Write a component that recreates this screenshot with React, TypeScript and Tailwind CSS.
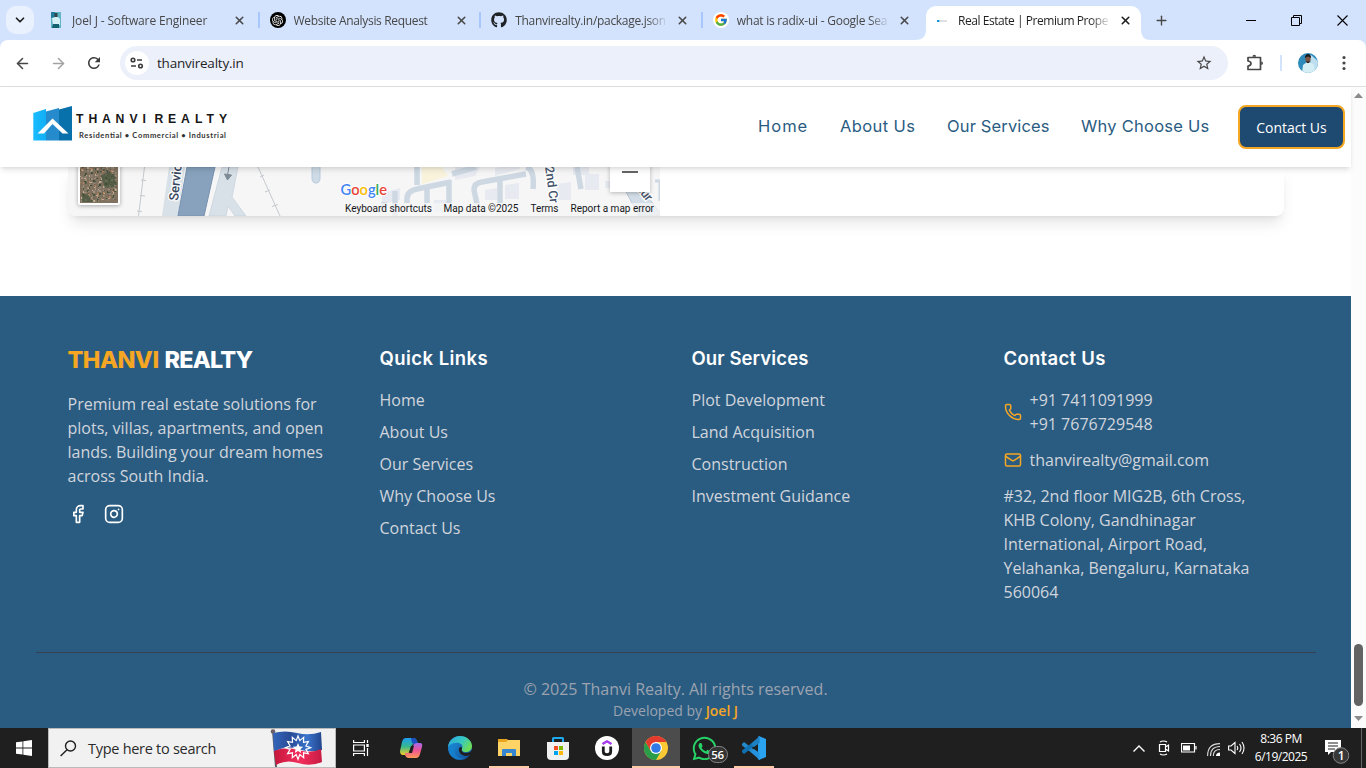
import React from 'react';
import { Facebook, Instagram, Phone, Mail, X, Plus, ChevronDown, ArrowLeft, ArrowRight } from 'lucide-react';
import { FaGithub, FaWhatsapp } from 'react-icons/fa';
import { FcGoogle } from 'react-icons/fc';
import { SiOpenai } from 'react-icons/si';
import { MdRefresh, MdStarOutline } from 'react-icons/md';

const tabs = [
  { title: 'Joel J - Software Engineer', tracking: 'tracking-[-0.14px]', icon: <PortraitIcon /> },
  {
    title: 'Website Analysis Request',
    tracking: 'tracking-[-0.33px]',
    icon: (
      <span className="flex size-4 items-center justify-center rounded-full bg-black text-white">
        <SiOpenai size={11} />
      </span>
    ),
  },
  { title: 'Thanvirealty.in/package.json', tracking: 'tracking-[-0.3px]', icon: <FaGithub size={16} color="#1f2328" /> },
  {
    title: 'what is radix-ui - Google Sea',
    tracking: 'tracking-[-0.25px]',
    icon: (
      <span className="flex size-4 items-center justify-center rounded-full bg-white">
        <FcGoogle size={14} />
      </span>
    ),
  },
];

function PortraitIcon() {
  return (
    <svg width="16" height="16" viewBox="0 0 16 16">
      <rect x="3" width="10" height="16" fill="#5fb4c6" />
      <rect x="3" width="4" height="6" fill="#247c9c" />
      <path d="M4 6l3-1h3l2 2v6H5z" fill="#d5f0f5" />
      <rect x="6.500" y="1" width="3" height="4" fill="#32444a" />
      <path d="M5 12h6v4H4z" fill="#14606f" />
    </svg>
  );
}

function TabStrip() {
  return (
    <div className="flex h-10 shrink-0 bg-[#d3e3fd]">
      <div className="w-[38px] shrink-0 pt-1.5 pl-1.5">
        <div className="flex size-7 items-center justify-center rounded-[10px] bg-[#e9f1fe]">
          <ChevronDown size={14} strokeWidth={3} color="#1f1f1f" />
        </div>
      </div>
      {tabs.map((t, i) => (
        <div key={t.title} className="flex w-[221.6px] shrink-0 items-center pl-2.5">
          <span className="flex size-4 shrink-0">{t.icon}</span>
          <span
            className={`mt-px ml-2 w-[150px] text-[12px] leading-5 whitespace-nowrap text-[#474747] [mask-image:linear-gradient(to_right,black_132px,transparent_153px)] ${t.tracking}`}
          >
            {t.title}
          </span>
          <X size={13} strokeWidth={2.8} color="#474747" className="ml-[11px] shrink-0" />
          <span className={`ml-auto h-4 w-0.5 ${i < 3 ? 'bg-[#a8c7fa]' : ''}`} />
        </div>
      ))}
      <div className="-ml-[1.4px] flex items-end">
        <svg width="11" height="10" className="-ml-2">
          <path d="M0 10 Q11 10 11 0 V10Z" fill="#fff" />
        </svg>
        <div className="flex h-[34px] w-[215px] items-center self-end rounded-t-[10px] bg-white pl-2.5">
          <svg width="16" height="16" className="mt-[-5px] shrink-0">
            <rect x="1" y="7" width="2.500" height="2" fill="#1b95d3" />
            <rect x="4" y="7.500" width="7" height="1" fill="#bbc4ca" />
          </svg>
          <span className="mt-[-4px] ml-1.5 w-[150px] text-[12px] leading-5 tracking-[-0.45px] whitespace-nowrap text-[#1f1f1f] [mask-image:linear-gradient(to_right,black_132px,transparent_153px)]">
            Real Estate | Premium Proper
          </span>
          <X size={13} strokeWidth={3} color="#1f1f1f" className="mt-[-6px] ml-[11px] shrink-0" />
        </div>
        <svg width="10" height="10">
          <path d="M0 0 Q0 10 10 10 H0Z" fill="#fff" />
        </svg>
      </div>
      <Plus size={15} strokeWidth={2.2} color="#474747" className="mt-[13px] ml-[3px]" />
      <div className="ml-auto flex items-center gap-[35px] pr-[18px]">
        <span className="h-px w-[10px] bg-black" />
        <svg width="11" height="11" fill="none" stroke="#000">
          <path d="M.5 2.500h8v8h-8zM2.500 2.500v-2h8v8h-2" />
        </svg>
        <svg width="11" height="11" stroke="#000" strokeWidth="1.100">
          <path d="M.5.5l10 10M10.500.5l-10 10" />
        </svg>
      </div>
    </div>
  );
}

function Toolbar() {
  return (
    <div className="h-[47px] shrink-0 bg-[#d3e3fd]">
      <div className="flex h-[47px] items-center rounded-t-[8px] border-b border-[#dedede] bg-white pl-3.5">
        <ArrowLeft size={17} strokeWidth={2.2} color="#474747" />
        <ArrowRight size={17} strokeWidth={2.2} color="#a3a3a3" className="ml-[19px]" />
        <MdRefresh size={18} color="#3c3c3c" className="ml-[18px]" />
        <div className="ml-[17px] flex h-[34px] w-[1108px] items-center rounded-full bg-[#ecf0fa] pr-[15px] pl-[5px]">
          <span className="flex size-6 items-center justify-center rounded-full bg-white">
            <svg width="14" height="12" fill="none" stroke="#3c3c3c" strokeWidth="1.600">
              <circle cx="3" cy="3" r="1.800" />
              <path d="M7 3h5M1 9h5" />
              <circle cx="10.500" cy="9" r="1.800" />
            </svg>
          </span>
          <span className="ml-2 text-[13.500px] tracking-[-0.22px] text-[#1f1f1f]">thanvirealty.in</span>
          <MdStarOutline size={18} color="#474747" className="ml-auto" />
        </div>
        <svg width="18" height="18" viewBox="0 0 18 18" fill="none" stroke="#474747" strokeWidth="1.700" className="ml-[18px]">
          <path d="M2 3.500h12.500v12H2v-3.500q3-.5 3-2.500T2 7z" strokeLinejoin="round" />
          <path d="M6.500 2.800q0-2 1.800-2t1.800 2zM15.200 7.500q1.800 0 1.800 1.700t-1.800 1.700z" fill="#474747" stroke="none" />
        </svg>
        <span className="ml-4 h-4 w-0.5 bg-[#d3e3fd]" />
        <svg width="20" height="20" viewBox="0 0 20 20" className="ml-4">
          <clipPath id="avatar">
            <circle cx="10" cy="10" r="10" />
          </clipPath>
          <g clipPath="url(#avatar)">
            <path fill="#2d8abb" d="M0 0h20v20H0z" />
            <path fill="#bddeef" d="M11 3l2-1 7 6v12h-5z" />
            <path d="M4 20l1-8 4-3h3l4 3 1 8z" fill="#d5edf5" />
            <ellipse cx="10" cy="5.700" rx="2.700" ry="4" fill="#7a5545" />
            <path d="M7 5c-.5-5.500 6.500-5.500 6 0-2-2-4-2-6 0" fill="#171b20" />
            <path d="M8 8q2 1 4 0l-1 2H9z" fill="#241f22" />
          </g>
        </svg>
        <svg width="4" height="16" className="ml-6" fill="#474747">
          <circle cx="2" cy="2.500" r="1.600" />
          <circle cx="2" cy="8" r="1.600" />
          <circle cx="2" cy="13.500" r="1.600" />
        </svg>
      </div>
    </div>
  );
}

function Logo() {
  return (
    <svg width="200" height="40" viewBox="30 103 200 40">
      <defs>
        <linearGradient id="lg" x2="1">
          <stop stopColor="#1bbcff" />
          <stop offset="1" stopColor="#11aef5" />
        </linearGradient>
        <linearGradient id="ln" x2="1">
          <stop stopColor="#6eb6df" />
          <stop offset="1" stopColor="#2577a9" />
        </linearGradient>
      </defs>
      <path d="M33.300 113L46 109v31.500H33.300z" fill="url(#lg)" />
      <path d="M46 111.500L59 108v32.500H46z" fill="#258bcc" />
      <path d="M59 109.500L72 106v34.500H59z" fill="#0871ac" />
      <path d="M37.500 133.500L52.500 118.500 68.500 133.500h-6l-10-9.500-8.500 9.500z" fill="#fff" />
      <g fontSize="12.200" fontWeight="700" fontFamily="Liberation Sans, sans-serif" fill="#171717">
        <text y="122.600" x="76 88.500 102 115.500 129.500 142.500">
          THANVI
        </text>
        <text y="122.600" x="154.500 168 181 195 206.500 219">
          REALTY
        </text>
      </g>
      <path d="M76.500 130.300h150" stroke="url(#ln)" strokeWidth="1.400" />
      <text x="79" y="137.600" fontSize="7.600" fontWeight="700" fontFamily="Lato, sans-serif" fill="#333" textLength="147" lengthAdjust="spacing">
        Residential • Commercial • Industrial
      </text>
    </svg>
  );
}

function Header() {
  return (
    <header className="z-10 flex h-20 shrink-0 items-center bg-white pr-[6px] pl-[30px] shadow-md">
      <div className="mt-[-9px]">
        <Logo />
      </div>
      <nav className="mt-[-2px] ml-auto flex items-center gap-8 font-['Inter','Open_Sans',sans-serif] text-[16.500px] font-normal text-[#2a5c82]">
        <span className="w-[50px] tracking-[1px] whitespace-nowrap">Home</span>
        <span className="w-[75px] tracking-[0.4px] whitespace-nowrap">About Us</span>
        <span className="w-[102px] tracking-[0.15px] whitespace-nowrap">Our Services</span>
        <span className="w-[128px] tracking-[0.25px] whitespace-nowrap">Why Choose Us</span>
      </nav>
      <button className="ml-[29px] h-11 w-[107px] rounded-lg border-2 border-[#f5a623] bg-[#1e4970] text-[14px] font-medium tracking-[-0.05px] text-white">
        Contact Us
      </button>
    </header>
  );
}

function MapView() {
  const label = { fontFamily: 'Roboto, sans-serif', fill: '#15171a' };
  return (
    <svg width="592" height="49" viewBox="68 167 592 49" className="shrink-0">
      <rect x="68" y="167" width="592" height="49" fill="#f6f6f6" />
      <g fill="none" stroke="#c4c9ce" strokeWidth="1">
        <path d="M144.500 167l-6 49M258 167l22 49" />
        <path d="M141 180l5 .5M140 195.500l5 .5M137 211l5 .5M260 177l4-2M265 192l5-2M272 206.500l6-2" />
      </g>
      <path d="M169 167h16l-7 49h-16z" fill="#d8e1e8" />
      <path d="M187 167h28l-11 49h-26z" fill="#88a2be" stroke="#7690af" strokeWidth="1" />
      <path d="M222 167h16l-6 30 14 19h-11l-7-10-2 10h-17z" fill="#d8e1e8" stroke="#c4d0db" strokeWidth=".7" />
      <path d="M229 167l-1.500 8M224.500 174l3 6 4-5z" stroke="#7d8b96" fill="#7d8b96" strokeWidth="1" />
      <text transform="translate(178 201) rotate(-84)" fontFamily="Roboto, sans-serif" fontSize="13" fontWeight="500" fill="#35465c" stroke="#fff" strokeWidth="2.500" paintOrder="stroke">
        Servic
      </text>
      <path d="M312 165v13q0 5 4 5t4-5v-13z" fill="#cedae5" stroke="#b7c9da" />
      <path d="M422 167h20l6 9-26 8z" fill="#faf3dc" />
      <g fill="#e7eaf0">
        <path d="M382 193l18-5v12l-18 4zM455 167h25l-5 9-20 4zM495 168l25-4v5l-25 7zM485 190l12-2v12h-12zM505 185l14-2v16h-14zM557 184l14-2v18h-14zM573 167h16v8h-16zM585 174h14v16h-14zM434 200h12v12h-12zM605 181h10v7h-10z" />
      </g>
      <g fill="none" stroke="#cdd8e3" strokeWidth="5.500">
        <path d="M417 167v18M407 203v-4q0-8 10-10l34-7M427 188v15M449 180v23" />
        <path d="M477 204l-3-14q0-7 8-8l44-8M500 180v23M452 174l24-7M526 167q9 2 7 22M577 167l4 22M395 191v25M384 202v10" />
      </g>
      <path d="M625 190l12-8 23 31v3h-21z" fill="#d2dde7" stroke="#bac9d5" />
      <path d="M655 181h5v20" fill="none" stroke="#cdd8e3" strokeWidth="3" />
      <g fontFamily="Roboto, sans-serif" fontSize="12.500" fontWeight="500" fill="#44546b" stroke="#fff" strokeWidth="2.500" paintOrder="stroke">
        <text transform="translate(545 167) rotate(82)">2nd Cr</text>
        <text transform="translate(636 188) rotate(52)">kur</text>
      </g>
      <path d="M341 203h319v13H341z" fill="#f5f5f5" opacity=".75" />
      <rect x="610" y="160" width="40" height="32" fill="#fff" filter="drop-shadow(0 1px 2px #0004)" />
      <path d="M622 172h16" stroke="#666" strokeWidth="2" />
      <rect x="78" y="160" width="42" height="45" rx="2" fill="#fff" filter="drop-shadow(0 1px 2px #0005)" />
      <rect x="80" y="160" width="38" height="43" fill="#80725f" />
      {Array.from({ length: 190 }, (_, i) => (
        <rect
          key={i}
          x={80 + ((i * 17) % 36)}
          y={167 + ((i * 23 + Math.floor(i / 7) * 5) % 34)}
          width={1 + (i % 3) * 0.6}
          height={1 + (i % 2)}
          fill={['#a2907c', '#4d5843', '#6d654f', '#c0aa94', '#3c4e3b', '#91867d', '#bb8765'][(i * 5 + Math.floor(i / 11)) % 7]}
        />
      ))}
      <path d="M101 176l8-5 7 6-2 10-9 1zM82 193l8 3 1 6h-9z" fill="#3d5039" opacity=".65" />
      <text y="194.500" fontFamily="Lato, sans-serif" fontSize="16" fontWeight="600" stroke="#fff" strokeWidth="1.500" paintOrder="stroke" textLength="46.500" x="340.500" lengthAdjust="spacingAndGlyphs">
        <tspan fill="#4285f4">G</tspan><tspan fill="#ea4335">o</tspan><tspan fill="#fbbc04">o</tspan><tspan fill="#4285f4">g</tspan><tspan fill="#34a853">l</tspan><tspan fill="#ea4335">e</tspan>
      </text>
      <g fontSize="10">
        <text x="345" y="212" textLength="87" lengthAdjust="spacingAndGlyphs" {...label}>Keyboard shortcuts</text>
        <text x="443.500" y="212" textLength="75" lengthAdjust="spacingAndGlyphs" {...label}>Map data ©2025</text>
        <text x="530.500" y="212" textLength="28" lengthAdjust="spacingAndGlyphs" {...label}>Terms</text>
        <text x="570.500" y="212" textLength="83.500" lengthAdjust="spacingAndGlyphs" {...label}>Report a map error</text>
      </g>
    </svg>
  );
}

const quick = ['Home', 'About Us', 'Our Services', 'Why Choose Us', 'Contact Us'];
const services = ['Plot Development', 'Land Acquisition', 'Construction', 'Investment Guidance'];

function Heading({ children, className }: { children: React.ReactNode; className: string }) {
  return (
    <h3 className={`mb-4 font-['Inter','Open_Sans',sans-serif] text-[18.500px] leading-7 font-semibold text-white ${className}`}>
      {children}
    </h3>
  );
}

function Footer() {
  return (
    <footer className="flex-1 bg-[#2a5c82] pl-[35.5px] text-[16px] leading-6 text-gray-300">
      <div className="w-[1280px]">
        <div className="grid h-[356px] grid-cols-4 gap-8 px-8 pt-12">
          <div>
            <h2 className="mb-4 font-['Inter','Open_Sans',sans-serif] text-[23.500px] leading-8 font-extrabold whitespace-nowrap text-white">
              <span className="tracking-[-0.55px] text-[#f5a623]">THANVI</span>
              <span className="ml-[6px] tracking-[-0.85px]">REALTY</span>
            </h2>
            <p className="w-[262px]">
              Premium real estate solutions for plots, villas, apartments, and open lands. Building your dream homes across
              South India.
            </p>
            <div className="mt-4 flex gap-4 text-white">
              <Facebook size={20} />
              <Instagram size={20} />
            </div>
          </div>
          <div>
            <Heading className="tracking-[0.45px]">Quick Links</Heading>
            <ul className="space-y-2">
              {quick.map((l) => (
                <li key={l}>{l}</li>
              ))}
            </ul>
          </div>
          <div>
            <Heading className="tracking-[0.1px]">Our Services</Heading>
            <ul className="space-y-2">
              {services.map((l) => (
                <li key={l}>{l}</li>
              ))}
            </ul>
          </div>
          <div>
            <Heading className="tracking-[0.3px]">Contact Us</Heading>
            <div className="flex items-center gap-2">
              <Phone size={18} color="#f5a623" />
              <div>
                +91 7411091999
                <br />
                +91 7676729548
              </div>
            </div>
            <div className="mt-3 flex items-center gap-2">
              <Mail size={18} color="#f5a623" />
              thanvirealty@gmail.com
            </div>
            <p className="mt-3 w-[255px]">
              #32, 2nd floor MIG2B, 6th Cross, KHB Colony, Gandhinagar International, Airport Road, Yelahanka, Bengaluru,
              Karnataka 560064
            </p>
          </div>
        </div>
        <div className="border-t border-[#374151] pt-6 text-center text-[#9ca3af]">
          <p>© 2025 Thanvi Realty. All rights reserved.</p>
          <p className="text-sm">
            Developed by <span className="font-semibold tracking-[-0.05px] text-[#f5a623]">Joel J</span>
          </p>
        </div>
      </div>
    </footer>
  );
}

function Scrollbar() {
  return (
    <div className="flex w-[15px] shrink-0 flex-col items-center bg-[#fcfcfc]">
      <svg width="9" height="5" className="mt-[6px]">
        <path d="M4.500 0L9 5H0z" fill="#8b8b8b" />
      </svg>
      <div className="mt-auto h-[62px] w-[9px] rounded-full bg-[#636363]" />
      <svg width="9" height="5" className="mt-[10px] mb-[7px]">
        <path d="M4.500 5L9 0H0z" fill="#8b8b8b" />
      </svg>
    </div>
  );
}

function Flag() {
  return (
    <svg width="54" height="38" viewBox="0 0 54 38">
      <defs>
        <linearGradient id="fb" x2="1">
          <stop stopColor="#3466bb" />
          <stop offset=".35" stopColor="#284b96" />
          <stop offset=".7" stopColor="#3973cc" />
          <stop offset="1" stopColor="#22458d" />
        </linearGradient>
        <linearGradient id="fr" x2="1">
          <stop stopColor="#c5173c" />
          <stop offset=".55" stopColor="#f42e5d" />
          <stop offset="1" stopColor="#c71c43" />
        </linearGradient>
      </defs>
      <path d="M2 2l3 36h2L4 2z" fill="#5f5964" />
      <circle cx="3" cy="2.500" r="2.300" fill="#6c6068" />
      <path d="M3 4q12-3 24 0t24-1l1 18q-12 3-24-1t-24 3z" fill="url(#fb)" />
      <path d="M4 22q11-5 24-1t23-1l1 13q-12 5-24 1T6 36z" fill="url(#fr)" />
      <path
        d="M28 7l1.800 4.600 3.900-3.200-.2 5 4.900-.8-2.500 4.300 4.700 1.800-4.700 1.700 2.500 4.300-4.900-.9.200 5-3.900-3.200L28 30.300l-1.800-4.700-3.900 3.200.2-5-4.900.9 2.500-4.300-4.700-1.700 4.700-1.800-2.500-4.300 4.900.8-.2-5 3.900 3.200z"
        fill="none"
        stroke="#fff"
        strokeWidth="1.200"
      />
      <path d="M28 14l1.500 3.400 3.700.4-2.800 2.500.8 3.700-3.200-1.900-3.200 1.900.8-3.700-2.800-2.500 3.700-.4z" fill="#fff" />
    </svg>
  );
}

function CopilotIcon() {
  return (
    <svg width="24" height="24" viewBox="0 0 24 24">
      <defs>
        <linearGradient id="c1" x2="0" y2="1">
          <stop stopColor="#209cf0" />
          <stop offset=".5" stopColor="#35b98f" />
          <stop offset="1" stopColor="#f3ce27" />
        </linearGradient>
        <linearGradient id="c2" x2="0" y2="1">
          <stop stopColor="#a668ee" />
          <stop offset=".5" stopColor="#ef5592" />
          <stop offset="1" stopColor="#fb9a58" />
        </linearGradient>
      </defs>
      <path d="M7 2h8q2 0 3 3l1 3h-4q-2 0-3 3l-2 5q-1 3-4 3H4q-3 0-3-4l2-9q1-4 4-4z" fill="url(#c1)" />
      <path d="M12 2h3q2 0 3 3l1 3h-4l-2-1z" fill="#1b4fc2" />
      <path d="M17 22H9q-2 0-3-3l0-2h3q2 0 3-3l2-4q1-3 4-3h3q3 0 2 4l-2 7q-1 4-4 4z" fill="url(#c2)" />
      <path d="M12 10h3l-2 7h-3z" fill="#1f1f1f" />
    </svg>
  );
}

function EdgeIcon() {
  return (
    <svg width="24" height="24" viewBox="0 0 24 24">
      <defs>
        <linearGradient id="e1" x2="1" y2=".5">
          <stop stopColor="#2ba5e2" />
          <stop offset=".6" stopColor="#38c9bf" />
          <stop offset="1" stopColor="#6bdc58" />
        </linearGradient>
        <linearGradient id="e2" x2="1" y2="1">
          <stop stopColor="#1d97e3" />
          <stop offset="1" stopColor="#114a94" />
        </linearGradient>
      </defs>
      <circle cx="12" cy="12" r="12" fill="url(#e2)" />
      <path d="M0 11C1 4 6 0 12 0c7 0 12 5 12 10 0 4-3 6-6 6-3 0-5-1-4-3 2-5-3-7-7-6-3 0-6 2-7 4z" fill="url(#e1)" />
      <path d="M14 12c-1 3 1 5 4 5 3 0 5-1 6-3v3l-1.500 1.500c-2 1.500-5 2-8 .5-4-2-4.500-6-2.500-8q2 0 2 1z" fill="#1f1f1f" />
      <path d="M8 11c-4 5 1 13 9 11-6 4-15 0-16-8 1-3 4-4 7-3z" fill="#1683d1" opacity=".7" />
    </svg>
  );
}

function ExplorerIcon() {
  return (
    <svg width="22" height="20" viewBox="0 0 22 20">
      <path d="M0 1h9l2 2h11v15H0z" fill="#e8a41e" />
      <path d="M0 4h8l2-2h12v16H0z" fill="#ffd466" />
      <path d="M4 18V12q0-1 1-1h12q1 0 1 1v6h-4v-3H8v3z" fill="#3687cf" />
    </svg>
  );
}

function StoreIcon() {
  return (
    <svg width="24" height="24" viewBox="0 0 24 24">
      <path d="M7 7V2.500Q7 2 7.500 2h9q.5 0 .5.500V7" fill="none" stroke="#1eaaf0" strokeWidth="2" />
      <path d="M1 6h22v14q0 4-4 4H5q-4 0-4-4z" fill="#f0f0f0" />
      <path d="M8 10h4v4H8z" fill="#f25022" />
      <path d="M13 10h4v4h-4z" fill="#7fba00" />
      <path d="M8 15h4v4H8z" fill="#00a4ef" />
      <path d="M13 15h4v4h-4z" fill="#ffb900" />
    </svg>
  );
}

function UdemyIcon() {
  return (
    <svg width="24" height="24" viewBox="0 0 24 24" fill="none">
      <circle cx="12" cy="12" r="12" fill="#fff" />
      <path d="M7.500 8L12 5.300 16.500 8" stroke="#a435f0" strokeWidth="2.400" />
      <path d="M8.300 10.500v5q0 3.200 3.700 3.200t3.700-3.200v-5" stroke="#1c1d1f" strokeWidth="2.800" />
    </svg>
  );
}

function ChromeIcon() {
  return (
    <svg width="24" height="24" viewBox="0 0 24 24">
      <circle cx="12" cy="12" r="12" fill="#fcc934" />
      <path d="M1.600 6A12 12 0 0 0 12 24l5.200-9H6.800z" fill="#2a9d4b" />
      <path d="M1.600 6A12 12 0 0 1 22.400 6H12L6.800 15z" fill="#e33b2e" />
      <circle cx="12" cy="12" r="6" fill="#fff" />
      <circle cx="12" cy="12" r="4.800" fill="#2f79e8" />
    </svg>
  );
}

function CodeIcon() {
  return (
    <svg width="24" height="24" viewBox="0 0 24 24">
      <path d="M0 8l2-2 15.500 12v5L0 9.500z" fill="#2489ca" />
      <path d="M0 16l2 2L17.500 6V1L0 14.500z" fill="#1070b3" />
      <path d="M17 0l7 3v18l-7 3-1-1V1z" fill="#2aa3f0" />
      <path d="M17.500 0L9 8l3 3 5.500-4z" fill="#1c80c3" />
      <path d="M12 13l-3 3 8.500 8v-7z" fill="#2593dc" />
    </svg>
  );
}

function TaskViewIcon() {
  return (
    <svg width="17" height="16" viewBox="0 0 17 16" fill="none" stroke="#fff" strokeWidth="1.200">
      <path d="M.6 0v2.500h10.800V0M.6 16v-2.500h10.800V16M.6 5h10.800v6H.6zM14.500 0v3M14.500 8v8" />
      <path d="M13.300 4h2.400v3h-2.400z" fill="#fff" stroke="none" />
    </svg>
  );
}

const apps = [
  { name: 'copilot', icon: <CopilotIcon />, box: '', bar: '' },
  { name: 'edge', icon: <EdgeIcon />, box: '', bar: '' },
  { name: 'explorer', icon: <ExplorerIcon />, box: '', bar: 'w-10' },
  { name: 'store', icon: <StoreIcon />, box: '', bar: '' },
  { name: 'udemy', icon: <UdemyIcon />, box: '', bar: '' },
  { name: 'chrome', icon: <ChromeIcon />, box: 'bg-[#4c4c4c]', bar: 'w-12' },
  {
    name: 'whatsapp',
    icon: (
      <>
        <FaWhatsapp size={27} color="#25d366" />
        <span className="absolute top-[18px] left-[27px] flex h-[17px] w-5 items-center justify-center rounded-full border border-[#858585] bg-[#333] text-[11.500px] font-semibold tracking-tight text-white">
          56
        </span>
      </>
    ),
    box: '',
    bar: '',
  },
  { name: 'code', icon: <CodeIcon />, box: '', bar: 'w-10' },
];

function Taskbar() {
  return (
    <div className="flex h-10 shrink-0 items-center bg-[#1f1f1f]">
      <div className="flex w-12 justify-center">
        <svg width="16" height="16" fill="#fff">
          <path d="M0 2.300L6.500 1.400v6.200H0zM7.300 1.300L16 0v7.600H7.300zM0 8.400h6.500v6.200L0 13.700zM7.300 8.400H16V16l-8.700-1.300z" />
        </svg>
      </div>
      <div className="flex h-10 w-72 items-center border border-[#b9b9b9] bg-[#f1f1f1] pl-[11px]">
        <svg width="17" height="17" fill="none" stroke="#1f1f1f" strokeWidth="1.400">
          <circle cx="10.500" cy="6" r="5" />
          <path d="M7 9.700L.6 16" />
        </svg>
        <span className="mt-px ml-[11px] text-[14.500px] tracking-[-0.28px] whitespace-nowrap text-[#2b2b2b]">Type here to search</span>
        <div className="mr-[11px] ml-auto">
          <Flag />
        </div>
      </div>
      <div className="flex w-[50px] justify-center">
        <TaskViewIcon />
      </div>
      {apps.map((a) => (
        <div key={a.name} className="flex h-10 w-[49px] justify-center">
          <div className={`relative flex h-10 w-12 items-center justify-center ${a.box}`}>
            {a.icon}
            {a.bar && <span className={`absolute bottom-0 h-0.5 bg-[#fdcaa8] ${a.bar}`} />}
          </div>
        </div>
      ))}
      <div className="ml-auto flex h-10 items-center text-white">
        <svg width="12" height="7" fill="none" stroke="#fff" strokeWidth="1.400">
          <path d="M.5 6.500L6 1l5.500 5.500" />
        </svg>
        <svg width="12" height="16" fill="none" stroke="#fff" strokeWidth="1.200" className="ml-[13px]">
          <path d="M1.500 4.500h6v7h-6zM7.500 7l3-2v6l-3-2M2 2q3.500-2 7 0M2 14q3.500 2 7 0" />
        </svg>
        <svg width="16" height="10" fill="none" stroke="#fff" className="ml-[11px]">
          <path d="M.5.5h13v8.500H.5zM15 3v3.500" strokeWidth="1.200" />
          <path d="M2 2.500h7v5H2z" fill="#fff" stroke="none" />
        </svg>
        <svg width="13" height="13" fill="none" stroke="#ddd" strokeWidth="1.100" className="mt-[2px] ml-[10px]">
          <path d="M.6 13Q.6.6 13 .6M3.500 13q0-9.500 9.500-9.500M6.300 13q0-6.500 6.700-6.500" />
          <path d="M9 13q0-3.500 4-3.500V13z" fill="#fff" stroke="none" />
        </svg>
        <svg width="17" height="14" fill="none" stroke="#fff" strokeWidth="1.100" className="ml-2">
          <path d="M.6 5H3l4-3.500v11L3 9H.6zM9 5q1.500 2 0 4M11.500 3q3 4 0 8M14 1q4 6 0 12" />
        </svg>
        <div className="ml-[9px] w-[54px] text-center text-[12px] leading-[18px] tracking-[-0.5px] whitespace-nowrap">
          8:36 PM
          <br />
          6/19/2025
        </div>
        <svg width="25" height="26" className="mt-[8px] ml-[17px]" viewBox="0 0 25 26">
          <path d="M0 1h16v12H6l-3 3v-3H0z" fill="#fff" />
          <path d="M3 4h10M3 7h10M3 10h7" stroke="#1f1f1f" />
          <circle cx="16" cy="16.500" r="7.800" fill="#383838" stroke="#858585" />
          <text x="12.800" y="20.800" fontSize="12" fontWeight="600" fontFamily="Open Sans, sans-serif" fill="#fff">
            1
          </text>
        </svg>
        <span className="ml-[11px] h-10 w-px bg-[#666]" />
        <span className="w-1" />
      </div>
    </div>
  );
}

export default function App() {
  return (
    <div className="flex h-[768px] w-[1366px] flex-col overflow-hidden bg-white font-['Open_Sans','Noto_Sans',sans-serif]">
      <TabStrip />
      <Toolbar />
      <main className="flex h-[641px] shrink-0">
        <div className="flex w-[1351px] flex-col">
          <Header />
          <section className="h-[129px] shrink-0 overflow-hidden bg-white pl-[68px]">
            <div className="h-[49px] w-[1216px] rounded-b-lg bg-white shadow-lg">
              <div className="flex overflow-hidden rounded-b-lg">
                <MapView />
              </div>
            </div>
          </section>
          <Footer />
        </div>
        <Scrollbar />
      </main>
      <Taskbar />
    </div>
  );
}
